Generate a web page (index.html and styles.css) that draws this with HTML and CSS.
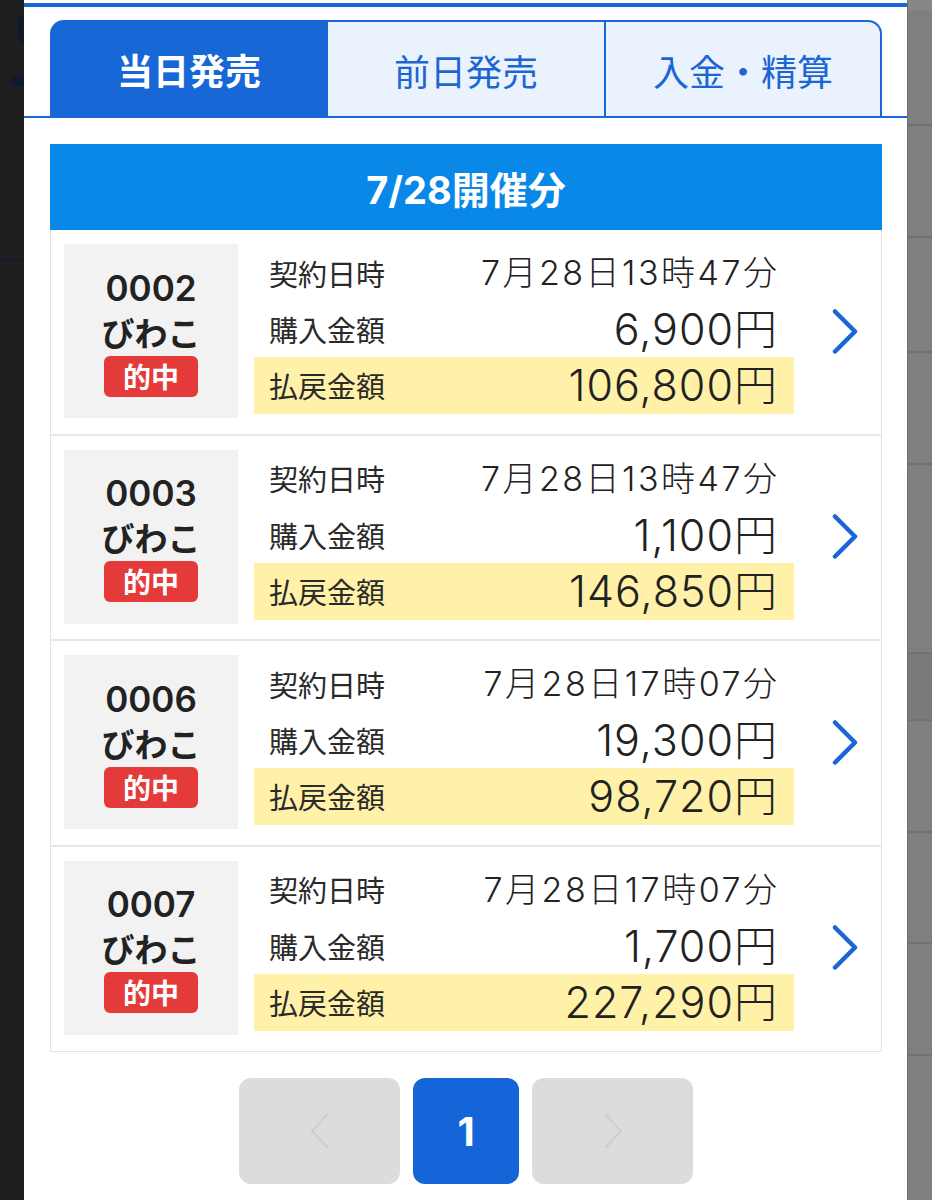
FILE: index.html
```html
<!DOCTYPE html>
<html lang="ja">
<head>
<meta charset="utf-8">
<title>投票履歴</title>
<link rel="stylesheet" href="styles.css">
</head>
<body>
<div class="screen">
  <div class="side-left">
    <div class="bg-glyph"></div>
    <div class="bg-bar"></div>
    <div class="bg-line"></div>
  </div>

  <div class="panel">
    <div class="topline"></div>
    <div class="tabs-wrap">
      <div class="tabs">
        <div class="tab tab-active">当日発売</div>
        <div class="tab tab-mid">前日発売</div>
        <div class="tab tab-last">入金・精算</div>
      </div>
    </div>

    <div class="content">
      <div class="date-head">7/28開催分</div>
      <div class="list">

        <div class="card">
          <div class="num-box">
            <div class="num">0002</div>
            <div class="place">びわこ</div>
            <div class="badge">的中</div>
          </div>
          <div class="info">
            <div class="row row-1"><span class="label">契約日時</span><span class="val val-date">7月28日13時47分</span></div>
            <div class="row row-2"><span class="label">購入金額</span><span class="val val-amt">6,900円</span></div>
            <div class="row row-3 hit"><span class="label">払戻金額</span><span class="val val-amt">106,800円</span></div>
          </div>
          <div class="chev">
            <svg width="27" height="45" viewBox="0 0 27 45"><polyline points="3,2.5 23,22.5 3,42.5" fill="none" stroke="#1a66d6" stroke-width="4.5" stroke-linecap="round" stroke-linejoin="round"/></svg>
          </div>
        </div>

        <div class="card">
          <div class="num-box">
            <div class="num">0003</div>
            <div class="place">びわこ</div>
            <div class="badge">的中</div>
          </div>
          <div class="info">
            <div class="row row-1"><span class="label">契約日時</span><span class="val val-date">7月28日13時47分</span></div>
            <div class="row row-2"><span class="label">購入金額</span><span class="val val-amt">1,100円</span></div>
            <div class="row row-3 hit"><span class="label">払戻金額</span><span class="val val-amt">146,850円</span></div>
          </div>
          <div class="chev">
            <svg width="27" height="45" viewBox="0 0 27 45"><polyline points="3,2.5 23,22.5 3,42.5" fill="none" stroke="#1a66d6" stroke-width="4.5" stroke-linecap="round" stroke-linejoin="round"/></svg>
          </div>
        </div>

        <div class="card">
          <div class="num-box">
            <div class="num">0006</div>
            <div class="place">びわこ</div>
            <div class="badge">的中</div>
          </div>
          <div class="info">
            <div class="row row-1"><span class="label">契約日時</span><span class="val val-date">7月28日17時07分</span></div>
            <div class="row row-2"><span class="label">購入金額</span><span class="val val-amt">19,300円</span></div>
            <div class="row row-3 hit"><span class="label">払戻金額</span><span class="val val-amt">98,720円</span></div>
          </div>
          <div class="chev">
            <svg width="27" height="45" viewBox="0 0 27 45"><polyline points="3,2.5 23,22.5 3,42.5" fill="none" stroke="#1a66d6" stroke-width="4.5" stroke-linecap="round" stroke-linejoin="round"/></svg>
          </div>
        </div>

        <div class="card">
          <div class="num-box">
            <div class="num">0007</div>
            <div class="place">びわこ</div>
            <div class="badge">的中</div>
          </div>
          <div class="info">
            <div class="row row-1"><span class="label">契約日時</span><span class="val val-date">7月28日17時07分</span></div>
            <div class="row row-2"><span class="label">購入金額</span><span class="val val-amt">1,700円</span></div>
            <div class="row row-3 hit"><span class="label">払戻金額</span><span class="val val-amt">227,290円</span></div>
          </div>
          <div class="chev">
            <svg width="27" height="45" viewBox="0 0 27 45"><polyline points="3,2.5 23,22.5 3,42.5" fill="none" stroke="#1a66d6" stroke-width="4.5" stroke-linecap="round" stroke-linejoin="round"/></svg>
          </div>
        </div>

      </div>

      <div class="pager">
        <div class="pg pg-arrow">
          <svg width="20" height="36" viewBox="0 0 20 36"><polyline points="18,1 2,18 18,35" fill="none" stroke="#cdcdcd" stroke-width="2"/></svg>
        </div>
        <div class="pg pg-current">1</div>
        <div class="pg pg-arrow">
          <svg width="20" height="36" viewBox="0 0 20 36"><polyline points="2,1 18,18 2,35" fill="none" stroke="#cdcdcd" stroke-width="2"/></svg>
        </div>
      </div>
    </div>
  </div>

  <div class="side-right">
    <div class="seg seg-top"></div>
    <div class="seg s112"></div>
    <div class="seg s115"></div>
    <div class="seg s112"></div>
    <div class="seg s189"></div>
    <div class="seg s67 dark"></div>
    <div class="seg s112"></div>
    <div class="seg s111"></div>
    <div class="seg s112"></div>
    <div class="seg s146"></div>
  </div>
</div>
</body>
</html>
```

FILE: styles.css
```css
html, body {
  margin: 0;
  padding: 0;
}

body {
  width: 932px;
  height: 1200px;
  overflow: hidden;
  background: #ffffff;
  font-family: "Noto Sans CJK JP", "Noto Sans", sans-serif;
  color: #222222;
}

.screen {
  display: flex;
  width: 932px;
  height: 1200px;
}

/* dimmed background page on the left */
.side-left {
  width: 24px;
  height: 1200px;
  background: #1e1e1e;
  overflow: hidden;
  display: flex;
  flex-direction: column;
}

.bg-glyph {
  width: 12px;
  height: 33px;
  margin: 12px 0 0 18px;
  border: 5px solid #0e1a2c;
  border-right: none;
  border-radius: 16px 0 0 16px;
  box-sizing: border-box;
}

.bg-bar {
  width: 12px;
  height: 9px;
  margin: 32px 0 0 12px;
  background: #0c1a33;
}

.bg-line {
  width: 24px;
  height: 2px;
  margin-top: 173px;
  background: #0f1c33;
}

/* dimmed background page on the right */
.side-right {
  width: 25px;
  height: 1200px;
  background: #7f7f7f;
  border-left: 1px solid #6d6d6d;
  box-sizing: border-box;
  display: flex;
  flex-direction: column;
  overflow: hidden;
}

.seg {
  flex: none;
  box-sizing: border-box;
  border-top: 2px solid #727272;
}

.seg-top {
  height: 124px;
  border-top: 10px solid #878787;
}

.s67 { height: 67px; }
.s111 { height: 111px; }
.s112 { height: 112px; }
.s115 { height: 115px; }
.s146 { height: 146px; }
.s189 { height: 189px; }

.dark {
  background: #7a7a7a;
}

/* modal panel */
.panel {
  width: 883px;
  height: 1200px;
  background: #ffffff;
  display: flex;
  flex-direction: column;
}

.topline {
  height: 4px;
  margin-top: 3px;
  background: #1a66d6;
}

.tabs-wrap {
  margin-top: 13px;
  padding: 0 25px 0 26px;
  border-bottom: 2px solid #1a66d6;
}

.tabs {
  display: flex;
  height: 96px;
}

.tab {
  display: flex;
  align-items: center;
  justify-content: center;
  box-sizing: border-box;
  font-size: 36px;
  line-height: 1;
  padding-top: 2px;
}

.tab-active {
  width: 278px;
  background: #1867d7;
  color: #ffffff;
  font-weight: 700;
  border-radius: 14px 0 0 0;
}

.tab-mid {
  width: 278px;
  background: #eaf2fd;
  color: #1c66d4;
  border-top: 2px solid #1a66d6;
  border-right: 2px solid #1a66d6;
}

.tab-last {
  width: 276px;
  background: #eaf2fd;
  color: #1c66d4;
  border-top: 2px solid #1a66d6;
  border-right: 2px solid #1a66d6;
  border-radius: 0 14px 0 0;
}

.content {
  padding: 26px 25px 0 26px;
  display: flex;
  flex-direction: column;
}

.date-head {
  height: 86px;
  background: #0a88e8;
  color: #ffffff;
  font-family: "Inter", "Noto Sans CJK JP", sans-serif;
  font-weight: 700;
  font-size: 38px;
  display: flex;
  align-items: center;
  justify-content: center;
}

.list {
  border: 1px solid #e3e3e3;
  border-top: none;
}

.card {
  display: flex;
  padding: 14px 0 15.5px 13px;
  border-bottom: 2px solid #e8e8e8;
}

.card:last-child {
  border-bottom: none;
  padding-bottom: 16.5px;
}

.num-box {
  width: 174px;
  height: 174px;
  background: #f2f2f2;
  display: flex;
  flex-direction: column;
  align-items: center;
  justify-content: center;
  margin-right: 16px;
  flex: none;
}

.num {
  font-family: "Inter", "Noto Sans CJK JP", sans-serif;
  font-weight: 600;
  font-size: 35px;
  line-height: 44px;
  color: #222222;
}

.place {
  font-weight: 700;
  font-size: 33px;
  line-height: 44px;
  color: #222222;
}

.badge {
  margin-top: 2px;
  width: 94px;
  height: 41px;
  border-radius: 6px;
  background: #e53a3a;
  color: #ffffff;
  font-weight: 700;
  font-size: 28px;
  line-height: 41px;
  text-align: center;
}

.info {
  width: 540px;
  flex: none;
  display: flex;
  flex-direction: column;
}

.row {
  display: flex;
  align-items: center;
  justify-content: space-between;
  padding: 0 17px 0 15px;
}

.row-1 { height: 58px; }
.row-2 { height: 55px; }
.row-3 { height: 57px; }

.hit {
  background: #fff1a8;
}

.label {
  font-size: 29px;
  line-height: 1;
  color: #2a2a2a;
}

.val {
  font-family: "Inter", "Noto Sans CJK JP", sans-serif;
  font-weight: 300;
  color: #222222;
  line-height: 1;
}

.val-date {
  font-size: 34px;
  letter-spacing: 2.5px;
  margin-right: -2.5px;
}

.val-amt {
  font-size: 43px;
  letter-spacing: 1px;
  margin-right: -1px;
}

.chev {
  flex: 1;
  display: flex;
  align-items: center;
  padding-left: 38px;
}

.pager {
  display: flex;
  justify-content: center;
  gap: 13px;
  margin-top: 26px;
}

.pg {
  height: 106px;
  border-radius: 12px;
  display: flex;
  align-items: center;
  justify-content: center;
}

.pg-arrow {
  width: 161px;
  background: #dcdcdc;
}

.pg-current {
  width: 106px;
  background: #1565d8;
  color: #ffffff;
  font-family: "Inter", "Noto Sans", sans-serif;
  font-weight: 700;
  font-size: 40px;
}
```
